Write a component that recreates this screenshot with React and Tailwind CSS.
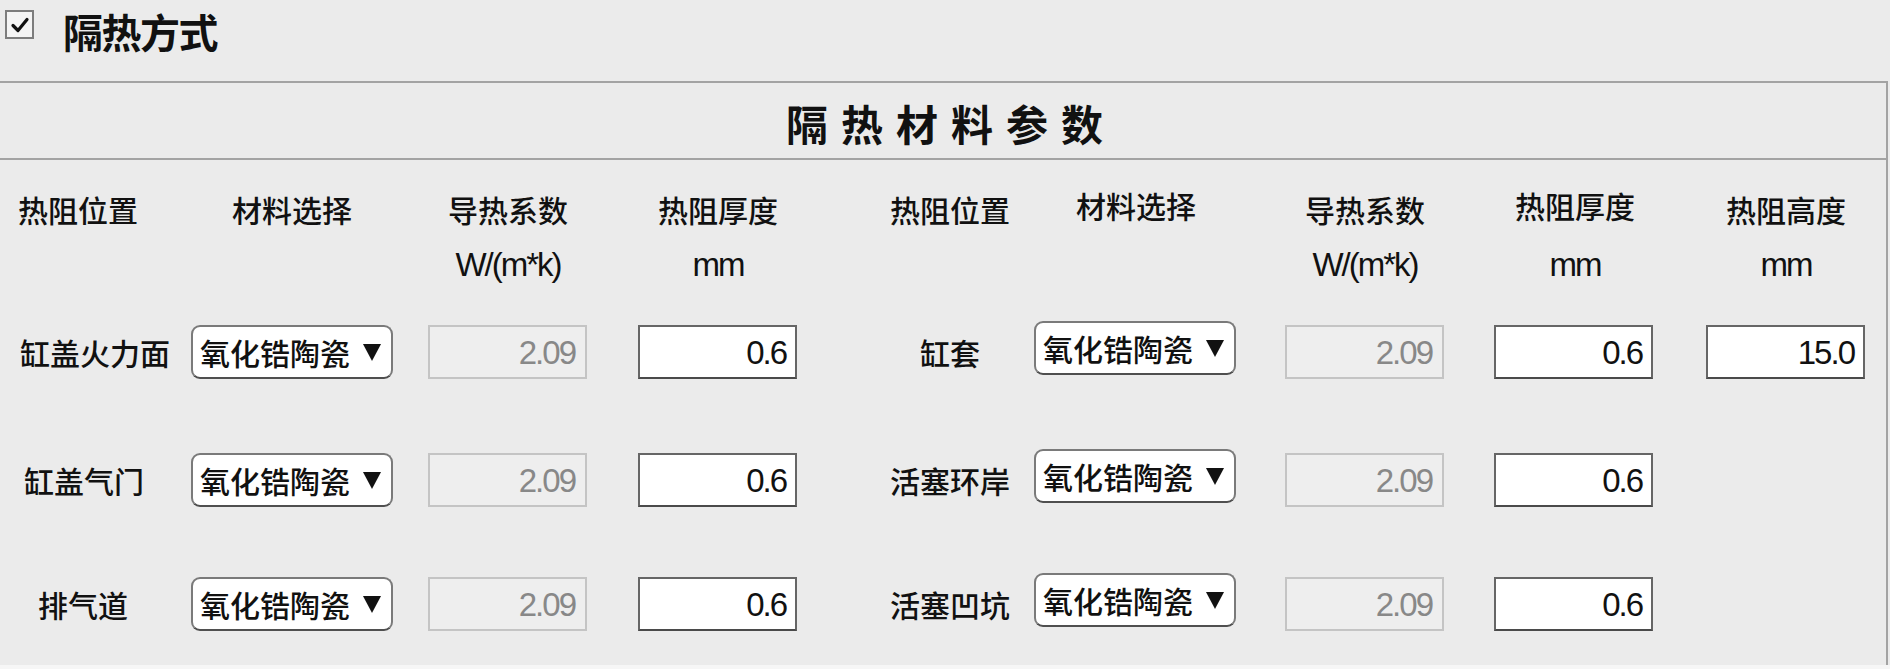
import React from "react";

const CJK = "font-['Noto_Sans_CJK_SC','Noto_Sans_CJK_JP',sans-serif]";

function Select({ up }) {
  return (
    <div
      className={
        up
          ? "mb-[8px] flex h-[54px] w-[202px] shrink-0 items-center rounded-[9px] border-2 border-[#7a7a7a] border-b-[#4f4f4f] bg-white pl-[7px]"
          : "flex h-[54px] w-[202px] shrink-0 items-center rounded-[9px] border-2 border-[#7a7a7a] border-b-[#4f4f4f] bg-white pl-[7px]"
      }
    >
      <span className="whitespace-nowrap text-[30px] font-medium leading-none text-[#111]">氧化锆陶瓷</span>
      <svg className="ml-[12px] shrink-0" width="20" height="20" viewBox="0 0 20 20">
        <polygon points="1,2 19,2 10,19" fill="#111" />
      </svg>
    </div>
  );
}

function Disabled({ value, className }) {
  return (
    <div
      className={
        "flex h-[54px] w-[159px] shrink-0 items-center justify-end border-2 border-[#c4c4c4] bg-[#eeeeee] pr-[10px] font-['Liberation_Sans',sans-serif] text-[33px] leading-none tracking-[-2px] text-[#888888] " +
        className
      }
    >
      {value}
    </div>
  );
}

function Field({ value, className }) {
  return (
    <div
      className={
        "flex h-[54px] w-[159px] shrink-0 items-center justify-end border-2 border-[#666666] border-b-[#4a4a4a] bg-white pr-[9px] font-['Liberation_Sans',sans-serif] text-[33px] leading-none tracking-[-2px] text-[#111] " +
        className
      }
    >
      {value}
    </div>
  );
}

function Header({ top, bottom, ml, up }) {
  return (
    <div className={"flex w-[130px] shrink-0 flex-col items-center " + ml}>
      <div className="flex h-[36px] items-center justify-center">
        <span
          className={
            up
              ? "mb-[8px] whitespace-nowrap text-[30px] font-medium leading-none text-[#111]"
              : "whitespace-nowrap text-[30px] font-medium leading-none text-[#111]"
          }
        >
          {top}
        </span>
      </div>
      <div className="mt-[20px] h-[36px] whitespace-nowrap font-['Liberation_Sans',sans-serif] text-[33px] leading-[36px] tracking-[-2px] text-[#111]">
        {bottom}
      </div>
    </div>
  );
}

function Row({ label, labelMl, label2, mt, height }) {
  return (
    <div className={"flex h-[54px] items-center " + mt}>
      <div className="flex w-[191px] shrink-0 items-center">
        <span className={"whitespace-nowrap text-[30px] font-medium leading-none text-[#111] " + labelMl}>{label}</span>
      </div>
      <Select />
      <Disabled value="2.09" className="ml-[35px]" />
      <Field value="0.6" className="ml-[51px]" />
      <div className="flex w-[237px] shrink-0 items-center">
        <span className="ml-[93px] w-[120px] whitespace-nowrap text-center text-[30px] font-medium leading-none text-[#111]">
          {label2}
        </span>
      </div>
      <Select up />
      <Disabled value="2.09" className="ml-[49px]" />
      <Field value="0.6" className="ml-[50px]" />
      {height ? <Field value="15.0" className="ml-[53px]" /> : null}
    </div>
  );
}

export default function App() {
  return (
    <div className={"flex h-[669px] w-[1890px] flex-col overflow-hidden bg-[#ebebeb] " + CJK}>
      {/* top band */}
      <div className="flex h-[81px] shrink-0 items-start pl-[5px] pt-[10px]">
        <div className="flex h-[29px] w-[29px] items-center justify-center border-2 border-[#7d7d7d] bg-[#f4f4f4]">
          <svg width="20" height="20" viewBox="0 0 20 20">
            <path d="M3 10.5 L8 15.5 L17 4.5" fill="none" stroke="#111" strokeWidth="3.2" strokeLinecap="round" strokeLinejoin="round" />
          </svg>
        </div>
        <div className="ml-[29px] mt-[1px] whitespace-nowrap text-[40px] font-bold leading-none tracking-[-1.5px] text-[#111]">
          隔热方式
        </div>
      </div>

      {/* panel */}
      <div className="flex w-[1888px] flex-1 flex-col border-r-2 border-t-2 border-[#a3a3a3]">
        <div className="flex h-[77px] shrink-0 items-center justify-center border-b-2 border-[#a3a3a3] pl-[16px] pt-[4px]">
          <span className="whitespace-nowrap text-[42px] font-bold leading-none tracking-[13px] text-[#111]">隔热材料参数</span>
        </div>

        {/* headers */}
        <div className="flex pt-[31px]">
          <Header top="热阻位置" ml="ml-[13px]" />
          <Header top="材料选择" ml="ml-[84px]" />
          <Header top="导热系数" bottom="W/(m*k)" ml="ml-[86px]" />
          <Header top="热阻厚度" bottom="mm" ml="ml-[80px]" />
          <Header top="热阻位置" ml="ml-[102px]" />
          <Header top="材料选择" ml="ml-[56px]" up />
          <Header top="导热系数" bottom="W/(m*k)" ml="ml-[99px]" />
          <Header top="热阻厚度" bottom="mm" ml="ml-[80px]" up />
          <Header top="热阻高度" bottom="mm" ml="ml-[81px]" />
        </div>

        <Row label="缸盖火力面" labelMl="ml-[20px]" label2="缸套" mt="mt-[42px]" height />
        <Row label="缸盖气门" labelMl="ml-[24px]" label2="活塞环岸" mt="mt-[74px]" />
        <Row label="排气道" labelMl="ml-[38px]" label2="活塞凹坑" mt="mt-[70px]" />
      </div>
      <div className="h-[4px] shrink-0 bg-[#f6f6f6]" />
    </div>
  );
}
